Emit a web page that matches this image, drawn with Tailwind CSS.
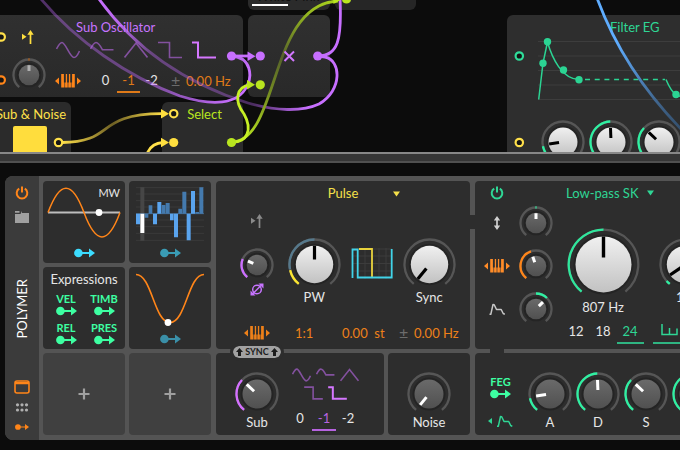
<!DOCTYPE html>
<html lang="en">
<head>
  <meta charset="UTF-8">
  <meta name="viewport" content="width=device-width, initial-scale=1.0">
  <title>Polymer</title>
  <script src="https://cdn.jsdelivr.net/npm/@tailwindcss/browser@4"></script>
</head>
<body class="min-h-screen overflow-hidden bg-[#0c0c0c] font-['Lato',sans-serif] text-[13px] leading-4 text-[#e6e6e6]">

  <!-- Shared icons -->
  <svg class="hidden">
    <symbol id="i-power" viewBox="0 0 14 14"><path d="M4.2 2.6A5.3 5.3 0 1 0 9.8 2.6M7 .6v6" fill="none" stroke="currentColor" stroke-width="2"/></symbol>
    <symbol id="i-route" viewBox="0 0 21 10"><path d="M4 5h12" stroke="currentColor" stroke-width="1.8"/><circle cx="4.4" cy="5" r="4.3" fill="currentColor"/><path d="M15 .5 21 5l-6 4.500z" fill="currentColor"/></symbol>
    <symbol id="i-piano" viewBox="0 0 26 14"><path d="M4 3.500v7L0 7zM22 3.500v7L26 7z" fill="currentColor"/><path d="M6.200 0h2.700v8.500h.6v5H6.200zM10.100 13.500v-5h.7V0h1.300v8.500h.6v5zM13.300 13.500v-5h.6V0h1.300v8.500h.7v5zM17.100 0h2.700v13.500h-3.300v-5h.6z" fill="currentColor"/></symbol>
    <symbol id="i-retrig" viewBox="0 0 12 14"><path d="M0 3.800v6L4.500 6.800z" fill="currentColor"/><path d="M8.500 14V3" stroke="currentColor" stroke-width="1.700"/><path d="M5.300 4.800 8.500 0l3.200 4.800z" fill="currentColor"/></symbol>
    <symbol id="i-env" viewBox="0 0 16 12"><path d="M.5 11.300h1.300L4 1.500l1.200.2L7.500 6.500h4.700l2 4 1.600.8" fill="none" stroke="currentColor" stroke-width="1.500" stroke-linejoin="round"/></symbol>
    <symbol id="w-sine" viewBox="0 0 24 18"><path d="M.5 8C3 3 4.500 1.500 6 1.500c3.500 0 8 15 12 15 1.800 0 3.500-2 5.500-6.500" fill="none" stroke="currentColor" stroke-width="1.600" vector-effect="non-scaling-stroke"/></symbol>
    <symbol id="w-half" viewBox="0 0 24 18"><path d="M.5 8C3 3 4.500 1.500 6 1.500S10 4 12.500 8.800h11" fill="none" stroke="currentColor" stroke-width="1.600" vector-effect="non-scaling-stroke"/></symbol>
    <symbol id="w-tri" viewBox="0 0 24 18"><path d="M.5 16.500 12 2l11.500 14.500" fill="none" stroke="currentColor" stroke-width="1.600" vector-effect="non-scaling-stroke"/></symbol>
    <symbol id="w-square" viewBox="0 0 24 18"><path d="M0 1.500h11.500v15H24" fill="none" stroke="currentColor" stroke-width="1.600" vector-effect="non-scaling-stroke"/></symbol>
    <symbol id="w-pulse" viewBox="0 0 24 18"><path d="M0 1.500h6v15h18" fill="none" stroke="currentColor" stroke-width="2" vector-effect="non-scaling-stroke"/></symbol>
  </svg>

  <!-- Patch canvas -->
  <section aria-label="Patch" class="relative h-[152px] overflow-hidden">
    <div class="absolute top-[-30px] left-[248px] flex h-10 w-[82px] flex-col justify-end rounded-md bg-[#2b2b2b] px-1 pb-1">
      <span class="pl-1 whitespace-nowrap text-[#101010]">White Pink</span>
      <span class="h-0.5 w-9 shrink-0 bg-white"></span>
    </div>
    <div class="absolute top-[-30px] left-[335px] h-10 w-[81px] rounded-md bg-[#262626]"></div>

    <div class="absolute top-[15px] left-0 flex h-[82px] w-[243px] rounded-r-md bg-linear-to-b from-[#303030] to-[#292929]">
      <div class="flex w-[55px] shrink-0 flex-col pl-3">
        <svg class="mt-[15px] ml-2.5 h-3.5 w-3 text-[#ffdf3f]"><use href="#i-retrig"/></svg>
        <label class="relative mt-[14px] size-[34px]" data-knob="sm" data-angle="0" data-arcs="-2 2 #c06010" data-dim="1" title="Sub phase"></label>
      </div>
      <div class="flex flex-col">
        <h2 class="flex h-6 items-center pl-[21px] text-[#c774ff]">Sub Oscillator</h2>
        <div class="flex h-[22px] items-center gap-[10px] pl-px text-[#83519f]">
          <button aria-label="Sine"><svg class="h-[18px] w-6"><use href="#w-sine"/></svg></button>
          <button aria-label="Half sine"><svg class="h-[18px] w-6"><use href="#w-half"/></svg></button>
          <button aria-label="Triangle"><svg class="h-[18px] w-6"><use href="#w-tri"/></svg></button>
          <button aria-label="Square"><svg class="h-[18px] w-6"><use href="#w-square"/></svg></button>
          <button aria-label="Pulse" class="text-[#d577ff]"><svg class="h-[18px] w-6"><use href="#w-pulse"/></svg></button>
        </div>
        <div class="mt-2 flex items-center">
          <svg class="mr-[13px] h-3.5 w-[26px] text-[#ff8519]"><use href="#i-piano"/></svg>
          <button class="h-6 w-[23px] border-b-2 border-transparent">0</button>
          <button class="h-6 w-[23px] border-b-2 border-[#e07a18] text-[#e07a18]">-1</button>
          <button class="h-6 w-[23px] border-b-2 border-transparent">-2</button>
          <span class="ml-2 w-[15px] text-base text-[#6c6c6c]">±</span>
          <span class="text-[#e07a18]">0.00 Hz</span>
        </div>
      </div>
    </div>

    <div class="absolute top-[102px] left-0 h-20 w-[71px] overflow-hidden rounded-tr-md bg-[#2b2b2b]">
      <h2 class="flex h-6 items-center justify-end pr-[5px] whitespace-nowrap text-[#ffe04a]">Sub &amp; Noise</h2>
      <div class="ml-[13px] size-[34px] rounded-xs bg-[#ffdd3d]"></div>
    </div>
    <div class="absolute top-[102px] left-[162px] h-20 w-[81px] rounded-md bg-[#2b2b2b]">
      <h2 class="flex h-6 items-center justify-center pl-1 text-[#b9e51f]">Select</h2>
    </div>
    <div class="absolute top-[15px] left-[248px] h-[82px] w-[82px] rounded-md bg-linear-to-b from-[#303030] to-[#292929]"></div>

    <div class="absolute top-[15px] right-0 left-[507px] h-40 overflow-hidden rounded-tl-md bg-[#2e2e2e]">
      <h2 class="flex h-6 items-center pl-[103px] whitespace-nowrap text-[#2fd695]">Filter EG</h2>
      <svg class="ml-[29px] h-[62px] w-[160px] overflow-visible" viewBox="536 39 160 62">
        <path d="M538 41.500h160M538 56h160M538 70.500h160M538 85h160M538 99.500h160" stroke="#3d3d3d"/>
        <path d="M538.700 99.500 543 63l4.500-21C552 58 562 79 579 79.500" fill="none" stroke="#2bd493" stroke-width="1.500"/>
        <path d="M585 79.500h80" stroke="#2bd493" stroke-width="1.500" stroke-dasharray="5 4.700"/>
        <path d="M666 79.500q5 12 10 15t12 3" fill="none" stroke="#2bd493" stroke-width="1.500"/>
        <g fill="#2bd493"><circle cx="543" cy="63.300" r="3.700"/><circle cx="547.500" cy="41.800" r="3.700"/><circle cx="563.500" cy="70" r="3.700"/><circle cx="579" cy="79.700" r="3.700"/><circle cx="676" cy="94.500" r="3.700"/></g>
      </svg>
      <div class="mt-[19px] flex pl-8">
        <label class="relative flex w-12 shrink-0 justify-center" data-knob="md" data-light="1" data-angle="-98" data-arcs="-141 -102 #2ff0a2" title="Attack"></label>
        <label class="relative flex w-12 shrink-0 justify-center" data-knob="md" data-light="1" data-angle="-2" data-arcs="-141 -2 #2ff0a2" title="Decay"></label>
        <label class="relative flex w-12 shrink-0 justify-center" data-knob="md" data-light="1" data-angle="-47" data-arcs="-141 -47 #2ff0a2" title="Sustain"></label>
      </div>
    </div>

    <!-- Cables and ports -->
    <svg class="pointer-events-none absolute top-0 left-0 h-[152px] w-[680px]" fill="none">
      <defs>
        <linearGradient id="gA" gradientUnits="userSpaceOnUse" x1="40" y1="0" x2="235" y2="100"><stop offset="0" stop-color="#c26bff" stop-opacity=".38"/><stop offset=".55" stop-color="#c26bff" stop-opacity=".42"/><stop offset="1" stop-color="#c76fff"/></linearGradient>
        <linearGradient id="gB" gradientUnits="userSpaceOnUse" x1="100" y1="0" x2="335" y2="0"><stop offset="0" stop-color="#c76fff"/><stop offset=".08" stop-color="#c76fff" stop-opacity=".9"/><stop offset=".22" stop-color="#c26bff" stop-opacity=".4"/><stop offset=".65" stop-color="#c26bff" stop-opacity=".35"/><stop offset=".88" stop-color="#c76fff"/></linearGradient>
        <linearGradient id="gY" gradientUnits="userSpaceOnUse" x1="62" y1="0" x2="164" y2="0"><stop offset="0" stop-color="#ffe04a"/><stop offset=".5" stop-color="#6e6024"/><stop offset="1" stop-color="#ffe04a"/></linearGradient>
        <linearGradient id="gL" gradientUnits="userSpaceOnUse" x1="0" y1="142" x2="0" y2="0"><stop offset="0" stop-color="#b9e51f"/><stop offset=".3" stop-color="#7b9420"/><stop offset=".6" stop-color="#56622a"/><stop offset="1" stop-color="#a7cf1e"/></linearGradient>
        <linearGradient id="gBl" gradientUnits="userSpaceOnUse" x1="598" y1="0" x2="680" y2="128"><stop offset=".3" stop-color="#5fadff"/><stop offset=".8" stop-color="#3f6288"/><stop offset="1" stop-color="#34506e"/></linearGradient>
      </defs>
      <g stroke-width="2.800">
        <path d="M231 56C252 57 252 77 247 86C238 105 212 106 180 96C128 77 75 40 41-1" stroke="url(#gA)"/>
        <path d="M99-1C130 42 175 80 248 103C275 111 302 112 319 104C343 90 341 60 325 57L318 56" stroke="url(#gB)"/>
        <path d="M318 56C338 56 342 40 340-2" stroke="#c76fff"/>
        <path d="M231 56h19" stroke="#c76fff"/>
        <path d="M231 142C280 142 268 4 338 1" stroke="url(#gL)"/>
        <path d="M231 142C247 143 253 130 244 114C234 101 236 87 250 84.700" stroke="#c6ef25"/>
        <path d="M62 142.500C116 142 94 114 162 113.700" stroke="url(#gY)"/>
        <path d="M147 154C150 146 155 143 163 142.500" stroke="#ffe04a"/>
        <path d="M597-2C615 47 643 90 682 130" stroke="url(#gBl)"/>
      </g>
      <path d="M284.500 51.500l9.500 9.500m0-9.500l-9.500 9.500" stroke="#d277ff" stroke-width="2"/>
      <g fill="#c76fff"><path d="M247.500 51.500v9.500l8-4.800z"/><circle cx="231.500" cy="56" r="4.600"/><circle cx="260.300" cy="56" r="4.600"/><circle cx="317.700" cy="56" r="4.600"/></g>
      <g fill="#b9e51f"><path d="M247 80v9.500l8-4.800zM333.500-4v8l7-4z"/><circle cx="260.300" cy="84.800" r="4.600"/><circle cx="231.500" cy="142.500" r="4.600"/><circle cx="346.500" cy="-1" r="4.600"/></g>
      <g fill="#ffdf3f"><path d="M161 109v9.500l8-4.800zM161 137.800v9.500l8-4.800z"/><circle cx="173.700" cy="142.500" r="4.600"/></g>
      <g stroke="#ffe04a" stroke-width="2.200" fill="#151515"><circle cx="173.700" cy="113.700" r="3.700"/><circle cx="58.500" cy="142.500" r="3.700"/><circle cx="1.200" cy="37" r="3.700"/><circle cx="519.300" cy="142.500" r="3.700"/><circle cx="1.200" cy="80" r="3.700" stroke="#ff8519"/><circle cx="519.300" cy="56" r="3.700" stroke="#2fdd9a"/></g>
    </svg>
  </section>

  <!-- Splitter -->
  <div class="h-[11px] border-t-2 border-b-2 border-t-[#888] border-b-[#505050] bg-[#363636]"></div>

  <!-- Device panel -->
  <main class="mt-[13px] ml-[5px] flex overflow-hidden rounded-l-lg bg-[#545454]">
    <aside class="flex w-[34px] shrink-0 flex-col items-center bg-[#3b3b3b] pt-2.5 pb-[9px]">
      <button aria-label="Power" class="text-[#ff8519]"><svg class="size-3.5"><use href="#i-power"/></svg></button>
      <button aria-label="Presets" class="mt-[11px] text-[#a0a0a0]">
        <svg class="h-3 w-3.5" viewBox="0 0 14 12"><path d="M0 3h5.500L7 0h0v2h7v10H0zM0 0h4.500v1.800H0z" fill="currentColor"/></svg>
      </button>
      <h1 class="mt-14 rotate-180 text-[13px] text-white [writing-mode:vertical-rl]">POLYMER</h1>
      <button aria-label="Panel" class="mt-auto text-[#ff8519]">
        <svg class="h-3.5 w-4" viewBox="0 0 16 14"><rect x="1" y="1" width="14" height="12" rx="2" fill="none" stroke="currentColor" stroke-width="1.600"/><path d="M1 2h14v2.300H1z" fill="currentColor"/></svg>
      </button>
      <button aria-label="Grid" class="mt-[9px] text-[#b0b0b0]">
        <svg class="h-2.5 w-3.5" viewBox="0 0 14 10" fill="currentColor"><circle cx="2.500" cy="1.800" r="1.600"/><circle cx="7" cy="1.800" r="1.600"/><circle cx="11.500" cy="1.800" r="1.600"/><circle cx="2.500" cy="7" r="1.600"/><circle cx="7" cy="7" r="1.600"/><circle cx="11.500" cy="7" r="1.600"/></svg>
      </button>
      <button aria-label="Modulators" class="mt-2.5 text-[#ff8519]"><svg class="h-2 w-3.5"><use href="#i-route"/></svg></button>
    </aside>

    <div class="flex min-w-0 flex-1 gap-[5px] py-[5px] pl-1">
      <!-- Modulators -->
      <div class="grid shrink-0 auto-rows-[82px] grid-cols-[82px_82px] gap-1">
        <div class="relative flex flex-col items-center rounded-sm bg-[#2d2d2d] pt-[5px]">
          <svg class="h-[54px] w-[74px]" viewBox="0 0 74 54" fill="none">
            <path d="M1 26.500h72" stroke="#bdbdbd" stroke-width="1.800"/>
            <path d="M1 26.500C13-6 25-6 37 26.500S61 59 73 26.500" stroke="#ff8519" stroke-width="1.500"/>
            <circle cx="52" cy="26.500" r="3.400" fill="#fff"/>
          </svg>
          <span class="absolute top-1 right-[5px] text-[11px]">MW</span>
          <svg class="mt-2 h-2.5 w-[21px] text-[#3cdcff]"><use href="#i-route"/></svg>
        </div>

        <div class="flex flex-col items-center rounded-sm bg-[#2d2d2d] pt-1.5">
          <svg class="h-[54px] w-[68px]" viewBox="50 114 204 160">
            <path d="M50 115h204M50 134h204M50 154h204M50 173h204M50 212h204M50 232h204M50 252h204M50 273h204" stroke="#414141" stroke-width="2"/>
            <path d="M63 114h12v160H63z" fill="#464646"/>
            <path d="M50 193h204" stroke="#5082b0" stroke-width="2"/>
            <path d="M50 193h12v32H50zM101 193h12v32h-12zM114 158h12v35h-12zM152 193h11v20h-11zM164 193h12v71h-12zM202 193h12v80h-12zM215 125h12v68h-12z" fill="#5aa4ee"/>
            <path d="M76 193h11v12H76zM88 168h11v25H88zM127 167h11v26h-11zM139 161h12v32h-12zM177 178h11v15h-11zM189 127h12v66h-12zM228 188h11v5h-11zM240 114h12v79h-12z" fill="#447aae"/>
            <path d="M63 193h12v58H63z" fill="#fff"/>
          </svg>
          <svg class="mt-[7px] h-2.5 w-[21px] text-[#3a9cb5]"><use href="#i-route"/></svg>
        </div>

        <div class="flex flex-col rounded-sm bg-[#2d2d2d] pt-1">
          <h2 class="text-center">Expressions</h2>
          <div class="mt-1 grid grid-cols-2 gap-y-1 pr-0.5 pl-1 text-[11px] font-bold text-[#3dffa2]">
            <button class="flex flex-col items-center">VEL<svg class="-mt-px h-2.5 w-[21px]"><use href="#i-route"/></svg></button>
            <button class="flex flex-col items-center">TIMB<svg class="-mt-px h-2.5 w-[21px]"><use href="#i-route"/></svg></button>
            <button class="flex flex-col items-center">REL<svg class="-mt-px h-2.5 w-[21px]"><use href="#i-route"/></svg></button>
            <button class="flex flex-col items-center">PRES<svg class="-mt-px h-2.5 w-[21px]"><use href="#i-route"/></svg></button>
          </div>
        </div>

        <div class="flex flex-col items-center rounded-sm bg-[#2d2d2d] pt-1.5">
          <svg class="h-[54px] w-[70px]" viewBox="0 0 70 54" fill="none">
            <path d="M1 1.500C17 1.500 19 49.500 35 49.500S53 1.500 69 1.500" stroke="#ff8519" stroke-width="1.600"/>
            <circle cx="33" cy="49.500" r="3.400" fill="#fff"/>
          </svg>
          <svg class="mt-[7px] h-2.5 w-[21px] text-[#3a8fa8]"><use href="#i-route"/></svg>
        </div>

        <button aria-label="Add modulator" class="flex items-center justify-center rounded-sm bg-[#404040] text-[#a0a0a0]"><svg class="size-3" viewBox="0 0 12 12"><path d="M6 .5v11M.5 6h11" stroke="currentColor" stroke-width="2.200"/></svg></button>
        <button aria-label="Add modulator" class="flex items-center justify-center rounded-sm bg-[#404040] text-[#a0a0a0]"><svg class="size-3" viewBox="0 0 12 12"><path d="M6 .5v11M.5 6h11" stroke="currentColor" stroke-width="2.200"/></svg></button>
      </div>

      <!-- Oscillator -->
      <div class="flex w-[254px] shrink-0 flex-col gap-1">
        <section class="relative flex h-[168px] flex-col rounded-sm bg-[#2d2d2d]">
          <button class="relative flex h-5 items-center justify-center pt-1 text-[#f5e04a]">
            Pulse
            <svg class="absolute top-2.5 right-[70px] h-1.5 w-[7px]" viewBox="0 0 7 6"><path d="M0 .5h7L3.500 5.500z" fill="currentColor"/></svg>
          </button>
          <div class="grid grid-cols-4 items-start justify-items-center px-3">
            <div class="flex flex-col items-center pt-3">
              <svg class="h-4 w-3 text-[#8a8a8a]"><use href="#i-retrig"/></svg>
              <label class="relative mt-[19px] size-[34px]" data-knob="sm" data-angle="-67" data-arcs="-141 -67 #cc6fff" title="Phase"></label>
              <svg class="h-4 w-4 text-[#c774ff]" viewBox="0 0 16 16"><circle cx="8" cy="7.500" r="4.300" fill="none" stroke="currentColor" stroke-width="1.500"/><path d="M3.500 12 12.500 3" stroke="currentColor" stroke-width="1.500"/><path d="M9.500 1.500h5v5zM1.500 8.500v5h5z" fill="currentColor"/></svg>
            </div>
            <label class="flex flex-col items-center pt-[37px] leading-3" data-knob="lg" data-light="1" data-angle="0" data-arcs="-141 -103 #fbe530,-101 0 #56798c">PW</label>
            <svg class="mt-[46px] h-[34px] w-[42px]" viewBox="0 0 42 34" fill="none">
              <path d="M1 2h40M1 9h40M1 16.500h40M1 24h40M7 1v31M14 1v31M21 1v31M28 1v31M35 1v31" stroke="#3c3c3c"/>
              <path d="M8 2h13v28" stroke="#e8d23c" stroke-width="1.800"/>
              <path d="M1.500 31V2.500h5.200V30.500h34V2" stroke="#41d3e8" stroke-width="1.800"/>
            </svg>
            <label class="flex flex-col items-center pt-[37px] leading-3" data-knob="lg" data-light="1" data-angle="-141" data-arcs="">Sync</label>
          </div>
          <div class="mt-auto flex h-8 items-center pl-7 text-[#ee8019]">
            <svg class="h-3.5 w-[26px]"><use href="#i-piano"/></svg>
            <span class="w-[72px] pl-[25px]">1:1</span>
            <span class="w-[57px]">0.00&nbsp; st</span>
            <span class="w-[15px] text-base text-[#6c6c6c]">±</span>
            <span>0.00 Hz</span>
          </div>
          <button class="absolute -bottom-[9px] left-[17px] z-10 flex h-3 w-12 items-center justify-center gap-0.5 rounded-full bg-[#a2a2a2] text-[9px] leading-3 font-bold text-[#1c1c1c] outline-3 outline-[#2d2d2d]">
            <svg class="h-2 w-[7px]" viewBox="0 0 7 8"><path d="M3.500 0 7 4H5v4H2V4H0z" fill="currentColor"/></svg>SYNC<svg class="h-2 w-[7px]" viewBox="0 0 7 8"><path d="M3.500 0 7 4H5v4H2V4H0z" fill="currentColor"/></svg>
          </button>
          <span class="absolute top-[34px] -right-[5px] h-3.5 w-[5px] bg-[#2d2d2d]"></span>
        </section>

        <div class="flex flex-1 gap-1">
          <section class="flex w-[168px] rounded-sm bg-[#2d2d2d]">
            <label class="relative flex w-[72px] flex-col items-center pt-[19px] pl-2.5 leading-3" data-knob="md" data-angle="-47" data-arcs="-141 -47 #d470ff">Sub</label>
            <div class="flex flex-col pt-[15px]">
              <div class="flex w-[74px] flex-wrap justify-center gap-x-[5px] gap-y-1 text-[#83519f]">
                <button aria-label="Sine"><svg class="h-3.5 w-[19px]"><use href="#w-sine"/></svg></button>
                <button aria-label="Half sine"><svg class="h-3.5 w-[19px]"><use href="#w-half"/></svg></button>
                <button aria-label="Triangle"><svg class="h-3.5 w-[19px]"><use href="#w-tri"/></svg></button>
                <button aria-label="Square"><svg class="h-3.5 w-[19px]"><use href="#w-square"/></svg></button>
                <button aria-label="Pulse" class="text-[#d577ff]"><svg class="h-3.5 w-[19px]"><use href="#w-pulse"/></svg></button>
              </div>
              <div class="mt-[7px] flex">
                <button class="h-6 w-6 border-b-2 border-transparent">0</button>
                <button class="h-6 w-6 border-b-2 border-[#b763e0] text-[#b763e0]">-1</button>
                <button class="h-6 w-6 border-b-2 border-transparent">-2</button>
              </div>
            </div>
          </section>
          <section class="flex flex-1 justify-center rounded-sm bg-[#2d2d2d]">
            <label class="relative flex flex-col items-center pt-[19px] leading-3" data-knob="md" data-angle="-141" data-arcs="">Noise</label>
          </section>
        </div>
      </div>

      <!-- Filter -->
      <div class="flex min-w-0 flex-1 flex-col gap-1">
        <section class="relative flex h-[168px] flex-col rounded-l-sm bg-[#2d2d2d] text-[#2fd695]">
          <header class="flex h-5 items-center pt-1">
            <button aria-label="Filter power" class="ml-[15px]"><svg class="size-3.5"><use href="#i-power"/></svg></button>
            <button class="ml-[62px] flex items-center gap-2 whitespace-nowrap">Low-pass SK<svg class="h-1.5 w-[7px]" viewBox="0 0 7 6"><path d="M0 .5h7L3.500 5.500z" fill="currentColor"/></svg></button>
          </header>
          <div class="flex items-start overflow-hidden">
            <div class="grid shrink-0 auto-rows-[43px] grid-cols-[44px_34px] place-items-center">
              <svg class="h-3.5 w-2 text-[#d0d0d0]" viewBox="0 0 8 14"><path d="M4 3v8" stroke="currentColor" stroke-width="1.700"/><path d="M.8 4.500 4 0l3.200 4.500zM.8 9.500 4 14l3.200-4.500z" fill="currentColor"/></svg>
              <label class="relative size-[34px]" data-knob="sm" data-angle="0" data-arcs="-2 2 #2ff0a2" title="Drive"></label>
              <svg class="h-3.5 w-[26px] text-[#ff8c28]"><use href="#i-piano"/></svg>
              <label class="relative size-[34px]" data-knob="sm" data-angle="-19" data-arcs="-141 -19 #ff8519" title="Key tracking"></label>
              <svg class="h-3 w-4 text-[#c8c8c8]"><use href="#i-env"/></svg>
              <label class="relative size-[34px]" data-knob="sm" data-angle="45" data-arcs="0 45 #2ff0a2" title="Envelope amount"></label>
            </div>
            <div class="ml-2.5 flex w-20 shrink-0 flex-col items-center text-[#e6e6e6]">
              <label class="flex flex-col items-center pt-[27px] leading-3" data-knob="xl" data-light="1" data-angle="0" data-arcs="-141 0 #2fe69c">807 Hz</label>
              <div class="mt-[7px] flex">
                <button class="h-6 w-[27px] border-b-2 border-transparent">12</button>
                <button class="h-6 w-[27px] border-b-2 border-transparent">18</button>
                <button class="h-6 w-[27px] border-b-2 border-[#2fb582] text-[#2fd695]">24</button>
              </div>
            </div>
            <div class="ml-2.5 flex w-16 shrink-0 flex-col items-center text-[#e6e6e6]">
              <label class="flex flex-col items-center pt-[37px] leading-3" data-knob="lg" data-light="1" data-angle="-124" data-arcs="-141 -131 #2ff0a2">1.5</label>
              <button aria-label="Slope" class="mt-[17px] flex h-6 w-full border-b-2 border-[#2fb582] pt-1 pl-2 text-[#2fd695]"><svg class="h-3 w-5" viewBox="0 0 20 12" fill="none"><path d="M1 0v10.500h15.700M8.500 4v6M16 4.500v6" stroke="currentColor" stroke-width="1.500"/></svg></button>
            </div>
          </div>
          <span class="absolute -bottom-1 left-[15px] h-1 w-3.5 bg-[#2d2d2d]"></span>
        </section>

        <section class="flex flex-1 overflow-hidden rounded-l-sm bg-[#2d2d2d]">
          <div class="flex w-[51px] shrink-0 flex-col items-center pt-[21px] text-[#3dffa2]">
            <button class="flex flex-col items-center text-[11px] font-bold">FEG<svg class="-mt-px h-2.5 w-[21px]"><use href="#i-route"/></svg></button>
            <svg class="mt-4 h-3 w-[25px]" viewBox="0 0 25 12" fill="none"><path d="M4 3v6L0 6z" fill="#2fd695"/><path d="M9 11.300h1.300L12.500 1.500l1.200.2L16 6.500h4.700l2 4 1.600.8" stroke="#2fd695" stroke-width="1.500" stroke-linejoin="round"/></svg>
          </div>
          <label class="relative flex w-12 shrink-0 flex-col items-center pt-[19px] leading-3" data-knob="md" data-angle="-98" data-arcs="-141 -102 #2ff0a2">A</label>
          <label class="relative flex w-12 shrink-0 flex-col items-center pt-[19px] leading-3" data-knob="md" data-angle="-2" data-arcs="-141 -2 #2ff0a2">D</label>
          <label class="relative flex w-12 shrink-0 flex-col items-center pt-[19px] leading-3" data-knob="md" data-angle="-47" data-arcs="-141 -47 #2ff0a2">S</label>
          <label class="relative flex w-12 shrink-0 flex-col items-center pt-[19px] leading-3" data-knob="md" data-angle="-30" data-arcs="-141 -30 #2ff0a2" title="Release"></label>
        </section>
      </div>
    </div>
  </main>

  <svg class="absolute size-0">
    <defs>
      <linearGradient id="kLight" x1="0" y1="0" x2="0" y2="1"><stop offset="0" stop-color="#f0f0f0"/><stop offset="1" stop-color="#c2c2c2"/></linearGradient>
      <linearGradient id="kDark" x1="0" y1="0" x2="0" y2="1"><stop offset="0" stop-color="#6a6a6a"/><stop offset="1" stop-color="#505050"/></linearGradient>
    </defs>
  </svg>

  <script>
    // box size, ring radius, cap radius, pointer start and end
    const knobSizes = {
      sm: { box: 34, ring: 15.5, cap: 10.3, from: 4, to: 9.8, width: 3 },
      md: { box: 44, ring: 20.5, cap: 14.5, from: 4, to: 14, width: 3 },
      lg: { box: 53, ring: 25, cap: 18.7, from: 5, to: 18.7, width: 3.2 },
      xl: { box: 73, ring: 34.8, cap: 28, from: 7, to: 28, width: 3.4 }
    };

    function point(c, r, deg) {
      const a = (deg - 90) * Math.PI / 180;
      return `${(c + r * Math.cos(a)).toFixed(2)} ${(c + r * Math.sin(a)).toFixed(2)}`;
    }

    function arc(c, r, from, to, color) {
      const large = to - from > 180 ? 1 : 0;
      return `<path d="M${point(c, r, from)}A${r} ${r} 0 ${large} 1 ${point(c, r, to)}" fill="none" stroke="${color}" stroke-width="2.3"/>`;
    }

    document.querySelectorAll('[data-knob]').forEach(el => {
      const k = knobSizes[el.dataset.knob];
      const c = k.box / 2;
      const light = el.dataset.light;
      const angle = Number(el.dataset.angle);
      const arcs = el.dataset.arcs.split(',').filter(Boolean).map(s => {
        const [from, to, color] = s.split(' ');
        return arc(c, k.ring, Number(from), Number(to), color);
      }).join('');
      const pointer = light ? '#000' : el.dataset.dim ? '#b0b0b0' : '#fff';
      el.insertAdjacentHTML('afterbegin', `
        <svg class="shrink-0" width="${k.box}" height="${k.box}">
          <circle cx="${c}" cy="${c}" r="${k.cap + 2}" fill="#242424"/>
          ${arc(c, k.ring, -141, 141, '#565656')}${arcs}
          <circle cx="${c}" cy="${c}" r="${k.cap}" fill="url(#${light ? 'kLight' : 'kDark'})"/>
          <path d="M${point(c, k.from, angle)}L${point(c, k.to, angle)}" stroke="${pointer}" stroke-width="${k.width}"/>
        </svg>
        <input type="range" min="-141" max="141" value="${angle}" class="sr-only" aria-label="${el.title || el.textContent.trim()}">
      `);
    });
  </script>
</body>
</html>
